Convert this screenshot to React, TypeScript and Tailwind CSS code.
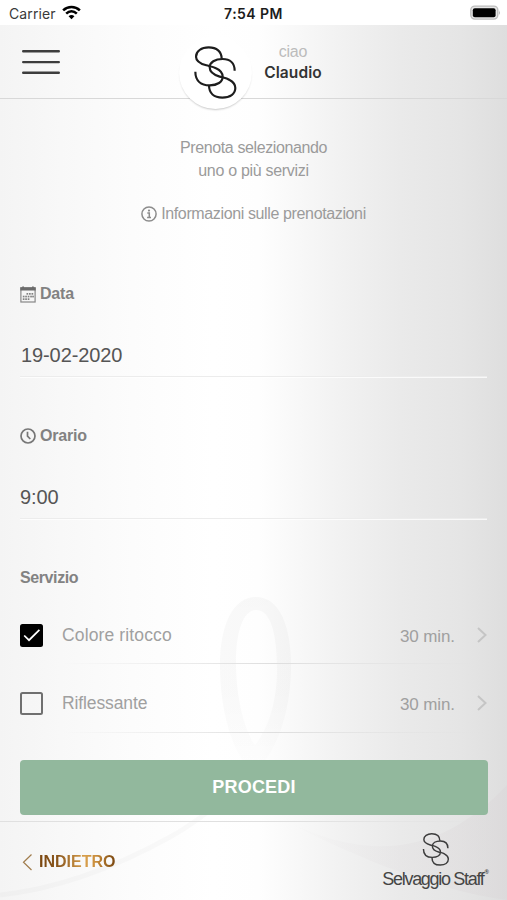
import React from "react";

function Monogram({ className, stroke, width }: { className: string; stroke: string; width: number }) {
  return (
    <svg viewBox="580 136 135 166" className={className} fill="none" stroke={stroke} strokeWidth={width} strokeLinecap="butt">
      <path d="M666 177C666 156 651 143 627 143C605 143 589 155 589 171C589 186 602 192 620 197C631 200 640 201 649 206C662 212 669 220 669 231C669 247 653 257 630 257C604 257 587 243 587 216" />
      <path d="M705 213C705 190 691 178 669 178C646 178 630 188 630 203C630 218 643 226 660 231C671 234 681 235 690 241C701 247 707 255 707 265C707 283 691 294 668 294C643 294 628 281 628 257" />
    </svg>
  );
}

function StatusBar() {
  return (
    <div className="relative flex h-[25px] shrink-0 items-center justify-between bg-white pl-[9px] pr-[6px] font-['Inter',sans-serif]">
      <div className="flex items-center gap-[6px] pt-[2px]">
        <span className="text-[14px] tracking-[0.1px] text-[#3a3a3a]">Carrier</span>
        <svg viewBox="0 0 20 15" className="h-[14.5px] w-[19px] -translate-y-px" fill="none" stroke="#000" strokeWidth="2.7">
          <path d="M1.2 5.6C6.2.8 13.8.8 18.8 5.6" />
          <path d="M4.4 9C7.8 5.8 12.2 5.8 15.6 9" />
          <path d="M6.9 11.7C8.8 10 11.2 10 13.1 11.7L10 14.8Z" fill="#000" stroke="none" />
        </svg>
      </div>
      <span className="absolute left-1/2 -translate-x-1/2 whitespace-nowrap pt-[2px] text-[14px] font-semibold tracking-[0.45px] text-[#1c1c1c]">7:54 PM</span>
      <svg viewBox="0 0 31 15" className="h-[15px] w-[31px]">
        <rect x="0.8" y="1.1" width="27" height="13" rx="4" fill="#e6e6e6" stroke="#bdbdbd" strokeWidth="1.4" />
        <rect x="2.8" y="3.2" width="22.8" height="9" rx="2" fill="#000" />
        <path d="M29 5.2Q30.8 7.6 29 10Z" fill="#b5b5b5" />
      </svg>
    </div>
  );
}

function Header() {
  return (
    <header className="relative flex h-[73.5px] shrink-0 items-start border-b border-[#d8d8d8]">
      <svg viewBox="0 0 38 26" className="ml-[22px] mt-[24px] h-[26px] w-[38px]" stroke="#3d3d3d" strokeWidth="2.4" strokeLinecap="round">
        <path d="M1.2 2.3H36.8M1.2 13.1H36.8M1.2 23.8H36.8" />
      </svg>
      <div className="absolute left-[179px] top-[11px] flex size-[73px] items-center justify-center rounded-full bg-white shadow-[0_2px_2px_-1px_rgba(0,0,0,0.22)]">
        <Monogram className="h-[55.3px] w-[45px]" stroke="#1d1d1d" width={6.5} />
      </div>
      <div className="ml-[203px] mt-[16px] flex w-[60px] flex-col items-center">
        <span className="text-[16px] leading-[21px] tracking-[-0.2px] text-[#bcbcbc]">ciao</span>
        <span className="font-['Inter',sans-serif] text-[15.5px] font-semibold leading-[21px] tracking-[0.1px] text-[#333]">Claudio</span>
      </div>
    </header>
  );
}

function CalendarIcon() {
  const cells = [
    [6.5, 7], [9, 7], [11.5, 7],
    [2.8, 9.7], [5.2, 9.7], [7.7, 9.7], [10.2, 9.7], [12.2, 9.7],
    [2.8, 12.3], [5.2, 12.3], [7.7, 12.3],
  ];
  return (
    <svg viewBox="0 0 16 17" className="h-[17px] w-4">
      <rect x="0.9" y="2" width="14.2" height="14" fill="none" stroke="#888" strokeWidth="1.2" />
      <path d="M.3 1.2H2.2V.4H4V1.2H12V.4H13.8V1.2H15.7V4.6H.3Z" fill="#6b6b6b" />
      {cells.map(([x, y]) => (
        <rect key={`${x}-${y}`} x={x} y={y} width="1.7" height="1.7" fill="#828282" />
      ))}
    </svg>
  );
}

function ClockIcon() {
  return (
    <svg viewBox="0 0 16 16" className="size-4" fill="none" stroke="#777" strokeWidth="1.7">
      <circle cx="8" cy="8" r="7" />
      <path d="M7.5 3.8V8.2L10.3 11" />
    </svg>
  );
}

function Field({ icon, label, value }: { icon: React.ReactNode; label: string; value: React.ReactNode }) {
  return (
    <div className="flex h-[141.5px] flex-col">
      <div className="flex h-5 items-center gap-1">
        {icon}
        {label}
      </div>
      <div className="mt-[38px] flex h-[35px] items-center border-b border-[#ececec] pb-[8px] text-[20px] tracking-[-0.1px] text-[#555] shadow-[0_1px_0_rgba(255,255,255,0.75)]">
        {value}
      </div>
    </div>
  );
}

function ServiceRow({ name, time, checked }: { name: React.ReactNode; time: string; checked?: boolean }) {
  return (
    <div className="flex h-[68.5px] items-start">
      {checked ? (
        <div className="mt-[17px] flex size-[23px] items-center justify-center rounded-[2.5px] bg-black">
          <svg viewBox="0 0 20 20" className="size-5" fill="none" stroke="#fff" strokeWidth="1.7">
            <path d="M2.2 10.5L7 15.2L17.4 4.8" />
          </svg>
        </div>
      ) : (
        <div className="mt-[17px] size-[23px] rounded-[2.5px] border-2 border-[#707070]" />
      )}
      <div className="relative ml-[19px] flex h-[57.5px] flex-1 items-start justify-between pt-[17px] leading-[23px] text-[#a0a0a0]">
        {name}
        <div className="flex items-start">
          <span className="pt-px text-[17px] tracking-[-0.1px]">{time}</span>
          <svg viewBox="0 0 10 16" className="ml-[22px] mt-[3px] h-4 w-[10px]" fill="none" stroke="#c5c5c5" strokeWidth="2">
            <path d="M1 1L8.5 8L1 15" />
          </svg>
        </div>
        <div className="absolute bottom-0 left-0 h-px w-full bg-linear-to-r from-transparent via-[#dedede] via-50% to-transparent" />
      </div>
    </div>
  );
}

export default function App() {
  return (
    <div className="flex h-[900px] w-[507px] flex-col overflow-hidden bg-white font-['Liberation_Sans',Arial,sans-serif]">
      <StatusBar />
      <div className="relative isolate flex flex-1 flex-col bg-[linear-gradient(90deg,#f4f4f4_0%,#f8f8f8_12%,#fcfcfc_26%,#ffffff_42%,#fefefe_51%,#f8f8f8_59%,#f1f1f1_68%,#eaeaea_79%,#e5e5e5_91%,#dedede_100%)]">
        <svg viewBox="0 25 507 875" className="absolute inset-0 -z-10 h-full w-full" fill="none">
          <defs>
            <linearGradient id="swoosh" x1="280" y1="0" x2="507" y2="0" gradientUnits="userSpaceOnUse">
              <stop offset="0" stopColor="#d8d2d5" stopOpacity="0" />
              <stop offset="1" stopColor="#d8d2d5" stopOpacity="0.3" />
            </linearGradient>
            <linearGradient id="petal" x1="0" y1="597" x2="0" y2="762" gradientUnits="userSpaceOnUse">
              <stop offset="0" stopColor="#000" stopOpacity="0.026" />
              <stop offset="0.6" stopColor="#000" stopOpacity="0.022" />
              <stop offset="1" stopColor="#000" stopOpacity="0.006" />
            </linearGradient>
          </defs>
          <path fillRule="evenodd" d="M256 597C281 597 292 630 291 670C290 712 278 744 264 762H244C229 741 220 704 220 665C220 625 233 597 256 597ZM256 610C243 610 236 632 236 662C236 695 243 728 255 745C269 728 277 700 277 670C277 634 271 610 256 610Z" fill="url(#petal)" />
          <path d="M0 895C65 888 125 862 170 837C190 826 200 817 211 810" stroke="#000" strokeOpacity="0.018" strokeWidth="5" />
          <path d="M280 818C380 870 450 845 507 785V900C430 890 340 850 280 818Z" fill="url(#swoosh)" />
        </svg>
        <Header />
        <main className="flex flex-1 flex-col px-5">
          <p className="mt-[37px] text-center text-[16px] leading-[23px] tracking-[-0.4px] text-[#9b9b9b]">
            Prenota selezionando
            <br />
            <span className="tracking-[-0.3px]">uno o più servizi</span>
          </p>
          <div className="mt-[20px] flex h-[23px] items-center justify-center gap-1">
            <svg viewBox="0 0 16 16" className="mt-px size-4" fill="none" stroke="#8c8c8c" strokeWidth="1.5">
              <circle cx="8" cy="8" r="7.1" />
              <path d="M6.3 7H8.3V11.4M6.1 11.6H10" />
              <circle cx="8" cy="4.6" r="1.1" fill="#8c8c8c" stroke="none" />
            </svg>
            <span className="pt-px text-[16px] tracking-[-0.37px] text-[#9b9b9b]">Informazioni sulle prenotazioni</span>
          </div>
          <div className="mt-[59.5px] text-[16px] font-bold leading-5 tracking-[-0.2px] text-[#828282]">
            <Field icon={<CalendarIcon />} label="Data" value={<span className="pl-px font-normal">19-02-2020</span>} />
            <Field icon={<ClockIcon />} label="Orario" value={<span className="font-normal">9:00</span>} />
          </div>
          <h2 className="h-5 pt-px text-[16px] font-bold leading-5 tracking-[-0.4px] text-[#828282]">Servizio</h2>
          <div className="mt-[19.5px]">
            <ServiceRow name={<span className="text-[17.5px] tracking-[0.13px]">Colore ritocco</span>} time="30 min." checked />
            <ServiceRow name={<span className="text-[17.5px] tracking-[-0.12px]">Riflessante</span>} time="30 min." />
          </div>
          <button className="mt-[16px] h-[55px] w-[468px] rounded-[4px] bg-[#92b89d] text-[18px] font-bold tracking-[0.2px] text-white">PROCEDI</button>
        </main>
        <footer className="flex h-[79px] shrink-0 items-start justify-between pl-[22px] pr-[18px]">
          <div className="absolute bottom-[78px] left-0 h-[1.5px] w-full bg-linear-to-r from-[#e0e0e0] from-60% to-transparent" />
          <div className="mt-[31px] flex items-center gap-[6px]">
            <svg viewBox="0 0 11 18" className="h-[18px] w-[11px]" fill="none" stroke="#a07c4c" strokeWidth="1.2">
              <path d="M9.5 1.5L1.5 9.3L9.5 17" />
            </svg>
            <span className="bg-[linear-gradient(90deg,#7a4710,#8a561c_25%,#d9a04c_60%,#c98d3b_75%,#7a4710)] bg-clip-text text-[16px] font-bold leading-5 text-transparent">INDIETRO</span>
          </div>
          <div className="mt-[11px] flex flex-col items-center text-[#454545]">
            <Monogram className="h-[35px] w-[28px]" stroke="#3c3c3c" width={7} />
            <div className="mt-px flex items-start whitespace-nowrap text-[18px] leading-[22px] tracking-[-1.3px]">
              <span>Selvaggio Staff</span>
              <span className="pl-px text-[6px] font-bold leading-[8px] tracking-normal">®</span>
            </div>
          </div>
        </footer>
      </div>
    </div>
  );
}
